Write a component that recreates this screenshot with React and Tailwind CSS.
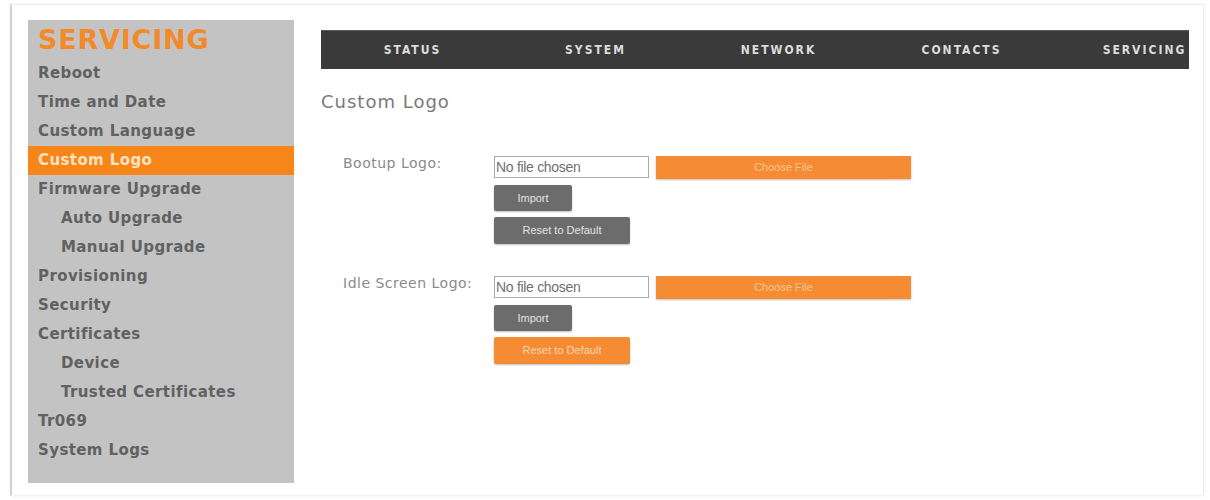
import React from "react";

const menu = [
  { label: "Reboot" },
  { label: "Time and Date" },
  { label: "Custom Language" },
  { label: "Custom Logo", active: true },
  { label: "Firmware Upgrade" },
  { label: "Auto Upgrade", sub: true },
  { label: "Manual Upgrade", sub: true },
  { label: "Provisioning" },
  { label: "Security" },
  { label: "Certificates" },
  { label: "Device", sub: true },
  { label: "Trusted Certificates", sub: true },
  { label: "Tr069" },
  { label: "System Logs" },
];

const tabs = ["STATUS", "SYSTEM", "NETWORK", "CONTACTS", "SERVICING"];

function Sidebar() {
  return (
    <aside className="w-[266px] h-[463px] shrink-0 bg-[#c3c3c3] pt-[5px] font-['DejaVu_Sans',sans-serif]">
      <div className="pl-[10px] text-[27px] leading-[30px] font-bold text-[#f38a2a] tracking-[0.8px]">
        SERVICING
      </div>
      <ul className="mt-[4px]">
        {menu.map((m) => (
          <li
            key={m.label}
            className={
              "h-[29px] flex items-center text-[15px] font-bold tracking-[0.4px] " +
              (m.sub ? "pl-[33px] " : "pl-[10px] ") +
              (m.active ? "bg-[#f6851a] text-[#ffe3c2]" : "text-[#616161]")
            }
          >
            {m.label}
          </li>
        ))}
      </ul>
    </aside>
  );
}

function FileRow({ label, resetOrange }) {
  return (
    <div className="flex">
      <div className="w-[173px] shrink-0 pl-[22px] whitespace-nowrap text-[14px] leading-[16px] tracking-[0.5px] text-[#8a8a8a] font-['DejaVu_Sans',sans-serif]">
        {label}
      </div>
      <div className="flex flex-col gap-[6px] font-['Liberation_Sans',sans-serif]">
        <div className="h-[24px] flex items-center gap-[7px]">
          <div className="w-[155px] h-[22px] border border-[#a7a9ad] bg-white flex items-center pl-[1px] text-[14px] text-[#707070] tracking-[-0.3px]">
            No file chosen
          </div>
          <button className="w-[255px] h-[23px] bg-[#f58b33] text-[#f8c48e] text-[11px] shadow-[0_1px_2px_rgba(0,0,0,0.25)]">
            Choose File
          </button>
        </div>
        <button className="w-[78px] h-[26px] rounded-[2px] bg-[#6c6c6c] text-[#e2e2e2] text-[11px] shadow-[0_1px_2px_rgba(0,0,0,0.25)]">
          Import
        </button>
        <button
          className={
            "w-[136px] h-[27px] rounded-[2px] text-[11px] shadow-[0_1px_2px_rgba(0,0,0,0.25)] " +
            (resetOrange ? "bg-[#f58b33] text-[#fcd7b3]" : "bg-[#6c6c6c] text-[#e2e2e2]")
          }
        >
          Reset to Default
        </button>
      </div>
    </div>
  );
}

export default function App() {
  return (
    <div className="w-[1210px] h-[500px] bg-white overflow-hidden pl-[10px] pt-[4px]">
      <div className="w-[1194px] h-[492px] border-l-2 border-t border-r border-b border-l-[#d2d2d2] border-t-[#ececec] border-r-[#eeeeee] border-b-[#f0f0f0] shadow-[0_0_4px_rgba(0,0,0,0.06)] flex pl-[16px] pt-[15px]">
        <Sidebar />
        <main className="ml-[27px] w-[868px]">
          <nav className="mt-[10px] h-[39px] bg-[#3a3a3a] border-t border-[#5a5a5a] overflow-hidden flex">
            {tabs.map((t) => (
              <div
                key={t}
                className="w-[183px] shrink-0 flex items-center justify-center text-[12px] font-bold tracking-[2px] text-[#dcdcdc] font-['DejaVu_Sans_Condensed','DejaVu_Sans',sans-serif]"
              >
                {t}
              </div>
            ))}
          </nav>
          <h1 className="mt-[21px] text-[18px] leading-[24px] tracking-[1px] text-[#7a7a7a] font-['DejaVu_Sans',sans-serif]">
            Custom Logo
          </h1>
          <div className="mt-[41px] flex flex-col gap-[31px]">
            <FileRow label="Bootup Logo:" />
            <FileRow label="Idle Screen Logo:" resetOrange />
          </div>
        </main>
      </div>
    </div>
  );
}
